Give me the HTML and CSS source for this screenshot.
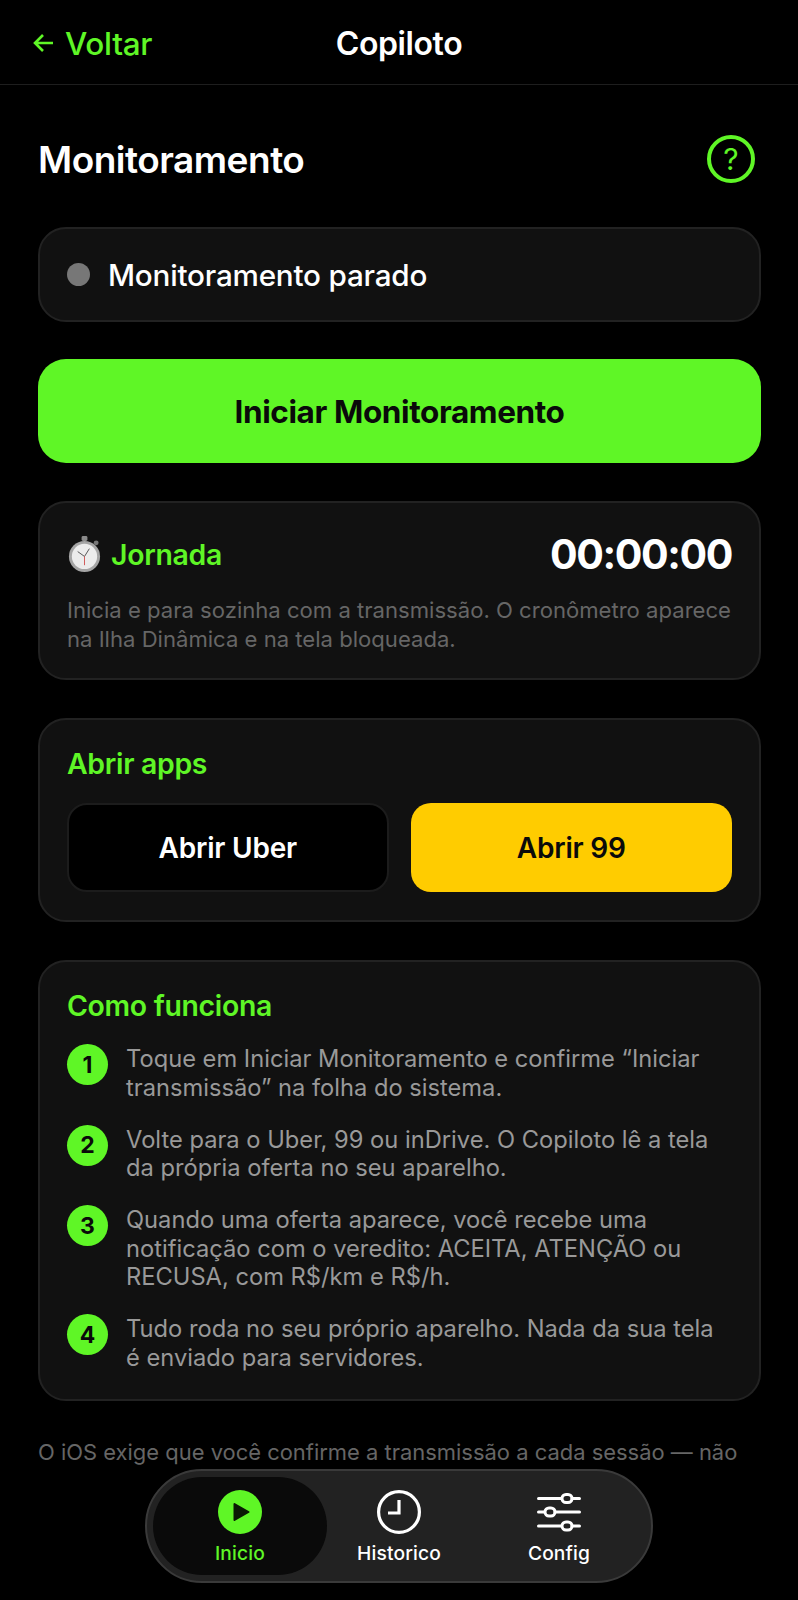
FILE: index.html
```html
<!DOCTYPE html>
<html lang="pt-BR">
<head>
    <meta charset="UTF-8">
    <meta name="viewport" content="width=device-width, initial-scale=1.0">
    <title>Copiloto</title>
    <link rel="stylesheet" href="styles.css">
</head>
<body>

<header class="topbar">
    <a class="back">
        <svg class="back-icon" viewBox="0 0 24 24"><path d="M21 12H3M11 4l-8 8 8 8"/></svg>
        Voltar
    </a>
    <h1>Copiloto</h1>
</header>

<main class="container">
    <div class="title-row">
        <h2>Monitoramento</h2>
        <div class="help">?</div>
    </div>

    <section class="card status">
        <span class="dot"></span>
        <span>Monitoramento parado</span>
    </section>

    <button class="start">Iniciar Monitoramento</button>

    <section class="card journey">
        <div class="journey-top">
            <div class="journey-name">
                <svg class="watch" viewBox="0 0 36 38">
                    <rect x="15" y="0" width="6" height="5" rx="1.5" fill="#8b8b8b"/>
                    <circle cx="30" cy="7" r="2.5" fill="#777"/>
                    <circle cx="18" cy="21" r="16" fill="#a5a5a5"/>
                    <circle cx="18" cy="21" r="13" fill="#ececec"/>
                    <path d="M18 21l-7-5" stroke="#555" stroke-width="1"/>
                    <path d="M18 21l5-8" stroke="#555" stroke-width="1"/>
                    <path d="M18 21v9" stroke="#c33" stroke-width="0.8"/>
                </svg>
                <span class="green-title">Jornada</span>
            </div>
            <div class="timer">00:00:00</div>
        </div>
        <p class="journey-text">Inicia e para sozinha com a transmissão. O cronômetro aparece na Ilha Dinâmica e na tela bloqueada.</p>
    </section>

    <section class="card apps">
        <div class="green-title">Abrir apps</div>
        <div class="app-buttons">
            <button class="app-btn uber">Abrir Uber</button>
            <button class="app-btn ninety">Abrir 99</button>
        </div>
    </section>

    <section class="card how">
        <div class="green-title">Como funciona</div>
        <ol class="steps">
            <li><span class="num">1</span><p>Toque em Iniciar Monitoramento e confirme “Iniciar transmissão” na folha do sistema.</p></li>
            <li><span class="num">2</span><p>Volte para o Uber, 99 ou inDrive. O Copiloto lê a tela da própria oferta no seu aparelho.</p></li>
            <li><span class="num">3</span><p>Quando uma oferta aparece, você recebe uma notificação com o veredito: ACEITA, ATENÇÃO ou RECUSA, com R$/km e R$/h.</p></li>
            <li><span class="num">4</span><p>Tudo roda no seu próprio aparelho. Nada da sua tela é enviado para servidores.</p></li>
        </ol>
    </section>

    <p class="note">O iOS exige que você confirme a transmissão a cada sessão — não</p>
</main>

<nav class="tabbar">
    <a class="tab active">
        <svg class="tab-icon" viewBox="0 0 44 44">
            <circle cx="22" cy="22" r="22" fill="#5ff626"/>
            <path d="M16.500 14l14 8-14 8z" fill="#0a1a04" stroke="#0a1a04" stroke-width="2" stroke-linejoin="round"/>
        </svg>
        Inicio
    </a>
    <a class="tab">
        <svg class="tab-icon" viewBox="0 0 44 44" fill="none" stroke="#fff" stroke-width="3.200">
            <circle cx="22" cy="22" r="20.400"/>
            <path d="M22 10v13H11"/>
        </svg>
        Historico
    </a>
    <a class="tab">
        <svg class="tab-icon" viewBox="0 0 44 44" fill="none" stroke="#fff" stroke-width="3" stroke-linecap="round">
            <path d="M1.500 8.500h23M35 8.500h7.500M1.500 22h6M18 22h24.500M1.500 36h23M35 36h7.500"/>
            <rect x="25" y="4.500" width="10" height="8" rx="4"/>
            <rect x="8" y="18" width="10" height="8" rx="4"/>
            <rect x="25" y="32" width="10" height="8" rx="4"/>
        </svg>
        Config
    </a>
</nav>

</body>
</html>
```

FILE: styles.css
```css
* {
    box-sizing: border-box;
}
html, body {
    height: 1600px;
    overflow: hidden;
}
body {
    margin: 0;
    position: relative;
    background-color: #000;
    color: #fff;
    font-family: Inter, "Liberation Sans", sans-serif;
}
.topbar {
    height: 85px;
    border-bottom: 1px solid #1e1e1e;
    padding: 2px 32px 0;
    display: flex;
    align-items: center;
    position: relative;
}
.back {
    display: flex;
    align-items: center;
    gap: 9px;
    color: #5ff626;
    font-size: 31.500px;
    font-weight: 500;
    letter-spacing: -0.3px;
}
.back-icon {
    width: 24px;
    height: 24px;
    fill: none;
    stroke: #5ff626;
    stroke-width: 2.6;
}
.topbar h1 {
    position: absolute;
    left: 0;
    right: 0;
    margin: 0;
    text-align: center;
    font-size: 32px;
    font-weight: 600;
    letter-spacing: -0.4px;
}
.container {
    padding: 0 37px 0 38px;
}
.title-row {
    height: 142px;
    padding: 6px 6px 0 0;
    display: flex;
    align-items: center;
    justify-content: space-between;
}
.title-row h2 {
    margin: 0;
    font-size: 37px;
    font-weight: 600;
    letter-spacing: -0.5px;
}
.help {
    width: 48px;
    height: 48px;
    border: 4px solid #5ff626;
    border-radius: 50%;
    color: #5ff626;
    font-size: 30px;
    font-weight: 400;
    display: flex;
    align-items: center;
    justify-content: center;
}
.card {
    background-color: #111;
    border: 2px solid #222;
    border-radius: 28px;
}
.status {
    height: 95px;
    padding: 0 27px;
    display: flex;
    align-items: center;
    gap: 18px;
    font-size: 29.650px;
    font-weight: 500;
    letter-spacing: -0.2px;
}
.dot {
    width: 23px;
    height: 23px;
    border-radius: 50%;
    background-color: #777;
}
.start {
    display: block;
    width: 100%;
    height: 104px;
    margin-top: 37px;
    border: none;
    border-radius: 28px;
    background-color: #5ff626;
    color: #0a0a0a;
    font-family: inherit;
    font-size: 31.500px;
    font-weight: 700;
    letter-spacing: -0.4px;
}
.journey {
    height: 179px;
    margin-top: 38px;
    padding: 26px 27px 0;
}
.journey-top {
    display: flex;
    align-items: center;
    justify-content: space-between;
}
.journey-name {
    display: flex;
    align-items: center;
    gap: 9px;
}
.watch {
    width: 35px;
    height: 37px;
}
.green-title {
    color: #5ff626;
    font-size: 28.400px;
    font-weight: 600;
    letter-spacing: -0.3px;
}
.timer {
    font-size: 41px;
    font-weight: 700;
    letter-spacing: -1.400px;
}
.journey-text {
    margin: 17px 0 0;
    color: #666;
    font-size: 22.100px;
    line-height: 29px;
}
.apps {
    height: 204px;
    margin-top: 38px;
    padding: 26px 27px 0;
}
.app-buttons {
    display: grid;
    grid-template-columns: 1fr 1fr;
    gap: 22px;
    margin-top: 22px;
}
.app-btn {
    height: 89px;
    border-radius: 20px;
    font-family: inherit;
    font-size: 28px;
    font-weight: 600;
    letter-spacing: -0.2px;
}
.uber {
    background-color: #000;
    border: 2px solid #1c1c1c;
    color: #fff;
}
.ninety {
    background-color: #ffcc00;
    border: none;
    color: #0a0a0a;
}
.how {
    height: 441px;
    margin-top: 38px;
    padding: 26px 27px 0;
}
.steps {
    list-style: none;
    margin: 22px 0 0;
    padding: 0;
    display: flex;
    flex-direction: column;
    gap: 23.500px;
}
.steps li {
    display: flex;
    gap: 18px;
}
.num {
    flex: none;
    width: 41px;
    height: 41px;
    margin-top: -1px;
    border-radius: 50%;
    background-color: #5ff626;
    color: #0a0a0a;
    font-size: 23px;
    font-weight: 700;
    display: flex;
    align-items: center;
    justify-content: center;
}
.steps p {
    margin: 0;
    color: #999;
    font-size: 23.700px;
    line-height: 28.500px;
}
.note {
    margin: 37px 0 0;
    color: #666;
    font-size: 21.950px;
    line-height: 29px;
    white-space: nowrap;
}
.tabbar {
    position: absolute;
    left: 145px;
    top: 1469px;
    width: 508px;
    height: 114px;
    padding: 6px;
    border: 2px solid #3a3a3a;
    border-radius: 57px;
    background-color: #222;
    display: grid;
    grid-template-columns: 174px 142px 1fr;
}
.tab {
    padding-top: 2px;
    border-radius: 50px;
    display: flex;
    flex-direction: column;
    align-items: center;
    justify-content: center;
    gap: 7px;
    font-size: 19.200px;
    font-weight: 500;
    letter-spacing: 0.15px;
}
.tab:nth-child(2) {
    padding-left: 2px;
}
.tab:last-child {
    padding-left: 4px;
}
.tab.active {
    background-color: #0a0a0a;
    color: #5ff626;
}
.tab-icon {
    width: 44px;
    height: 44px;
}
```
